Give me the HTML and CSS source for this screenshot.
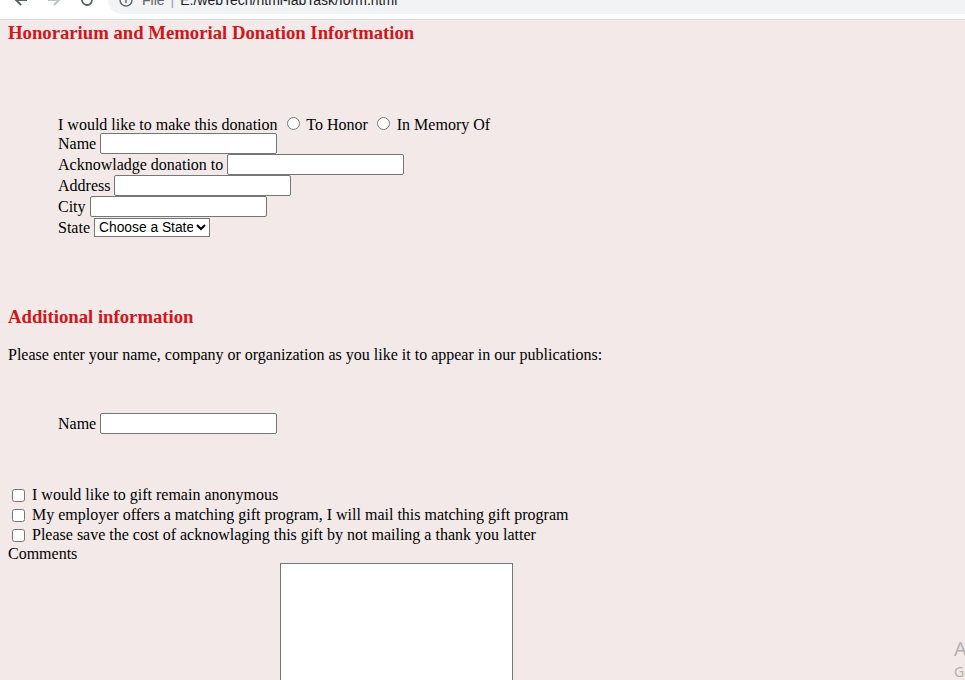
FILE: index.html
```
<!DOCTYPE html>
<html lang="en">
<head>
<meta charset="utf-8">
<title>form</title>
<link rel="stylesheet" href="styles.css">
</head>
<body>
<div class="chrome">
  <div class="toolbar">
    <svg class="nav" width="16" height="16" viewBox="0 0 16 16"><path d="M14 8H3M8 3L3 8l5 5" fill="none" stroke="#5f6368" stroke-width="2"/></svg>
    <svg class="nav" width="16" height="16" viewBox="0 0 16 16"><path d="M2 8h11M8 3l5 5-5 5" fill="none" stroke="#bdc1c6" stroke-width="2"/></svg>
    <svg class="nav" width="16" height="16" viewBox="0 0 16 16"><path d="M13 8a5 5 0 1 1-1.5-3.6M13 2v3.5H9.5" fill="none" stroke="#5f6368" stroke-width="1.8"/></svg>
    <div class="omnibox">
      <svg width="14" height="14" viewBox="0 0 14 14"><circle cx="7" cy="7" r="6" fill="none" stroke="#5f6368" stroke-width="1.4"/><path d="M7 6v4M7 4v1" stroke="#5f6368" stroke-width="1.4"/></svg>
      <span class="scheme">File</span><span class="sep">|</span><span class="url">E:/webTech/html-labTask/form.html</span>
    </div>
  </div>
</div>
<main class="page">
  <h3 class="title">Honorarium and Memorial Donation Infortmation</h3>
  <form class="form">
    <div class="donation">
      <div class="row first">I would like to make this donation <input type="radio" name="kind"> To Honor <input type="radio" name="kind"> In Memory Of</div>
      <div class="row">Name <input type="text" class="field"></div>
      <div class="row">Acknowladge donation to <input type="text" class="field"></div>
      <div class="row">Address <input type="text" class="field"></div>
      <div class="row">City <input type="text" class="field"></div>
      <div class="row">State <select class="state"><option>Choose a State</option></select></div>
    </div>
    <h3 class="title section">Additional information</h3>
    <p class="note">Please enter your name, company or organization as you like it to appear in our publications:</p>
    <div class="row pubname">Name <input type="text" class="field"></div>
    <div class="checks">
      <div class="check"><input type="checkbox"> I would like to gift remain anonymous</div>
      <div class="check"><input type="checkbox"> My employer offers a matching gift program, I will mail this matching gift program</div>
      <div class="check"><input type="checkbox"> Please save the cost of acknowlaging this gift by not mailing a thank you latter</div>
    </div>
    <div class="comments-label">Comments</div>
    <textarea class="comments"></textarea>
  </form>
</main>
<div class="watermark">
  <div class="wm-big">Activate Windows</div>
  <div class="wm-small">Go to Settings to activate Windows.</div>
</div>
</body>
</html>
```
FILE: styles.css
```
html {
  overflow: hidden;
  height: 100%;
  background: #f2e9e8;
}
body {
  margin: 0;
  font-family: "Liberation Serif", "Times New Roman", serif;
  font-size: 16px;
  color: #000;
  background: #f2e9e8;
}
.chrome {
  height: 19px;
  background: #fff;
  border-bottom: 1px solid #dedada;
  overflow: hidden;
}
.toolbar {
  height: 28px;
  margin-top: -14px;
  display: flex;
  align-items: center;
  padding-left: 13px;
  font-family: "Liberation Sans", Arial, sans-serif;
  font-size: 14px;
  color: #202124;
}
.nav {
  margin-right: 17px;
}
.omnibox {
  flex: 1;
  height: 28px;
  margin-left: -4px;
  background: #f1f3f4;
  border-radius: 14px 0 0 14px;
  display: flex;
  align-items: center;
  padding-left: 11px;
}
.scheme {
  margin-left: 9px;
  color: #5f6368;
}
.sep {
  margin: 0 6px;
  color: #9aa0a6;
}
.page {
  padding: 0 8px;
}
.title {
  margin: 2px 0 0;
  font-size: 18.72px;
  font-weight: bold;
  color: #d3151b;
}
.donation {
  margin: 70px 0 0 50px;
}
.row {
  line-height: 21px;
}
.row.first {
  line-height: 17px;
}
.field {
  box-sizing: border-box;
  width: 177px;
  height: 21px;
  margin: 0;
  border: 1px solid #767676;
  border-radius: 2px;
  background: #fff;
  vertical-align: top;
}
.state {
  box-sizing: border-box;
  width: 116px;
  height: 19px;
  margin-top: 1px;
  padding: 0;
  font-family: "Liberation Sans", Arial, sans-serif;
  font-size: 13.8px;
  border: 1px solid #767676;
  border-radius: 0;
  background: #fff;
  vertical-align: top;
}
.section {
  margin-top: 68px;
}
.note {
  margin: 18px 0 0;
}
.pubname {
  margin: 49px 0 0 50px;
}
.checks {
  margin-top: 51px;
}
.check {
  line-height: 20px;
}
.check input {
  margin: 3px 3px 3px 4px;
  vertical-align: -2px;
}
.comments-label {
  line-height: 18px;
}
.comments {
  display: block;
  margin: 0 0 0 272px;
  width: 233px;
  height: 200px;
  box-sizing: border-box;
  border: 1px solid #767676;
  background: #fff;
  resize: none;
}
.watermark {
  position: absolute;
  left: 954px;
  top: 636px;
  color: #b5b0b0;
  font-family: "Noto Sans", "Open Sans", sans-serif;
  white-space: nowrap;
}
.wm-big {
  font-size: 20px;
  line-height: 26px;
}
.wm-small {
  font-size: 14px;
  line-height: 20px;
}
```
